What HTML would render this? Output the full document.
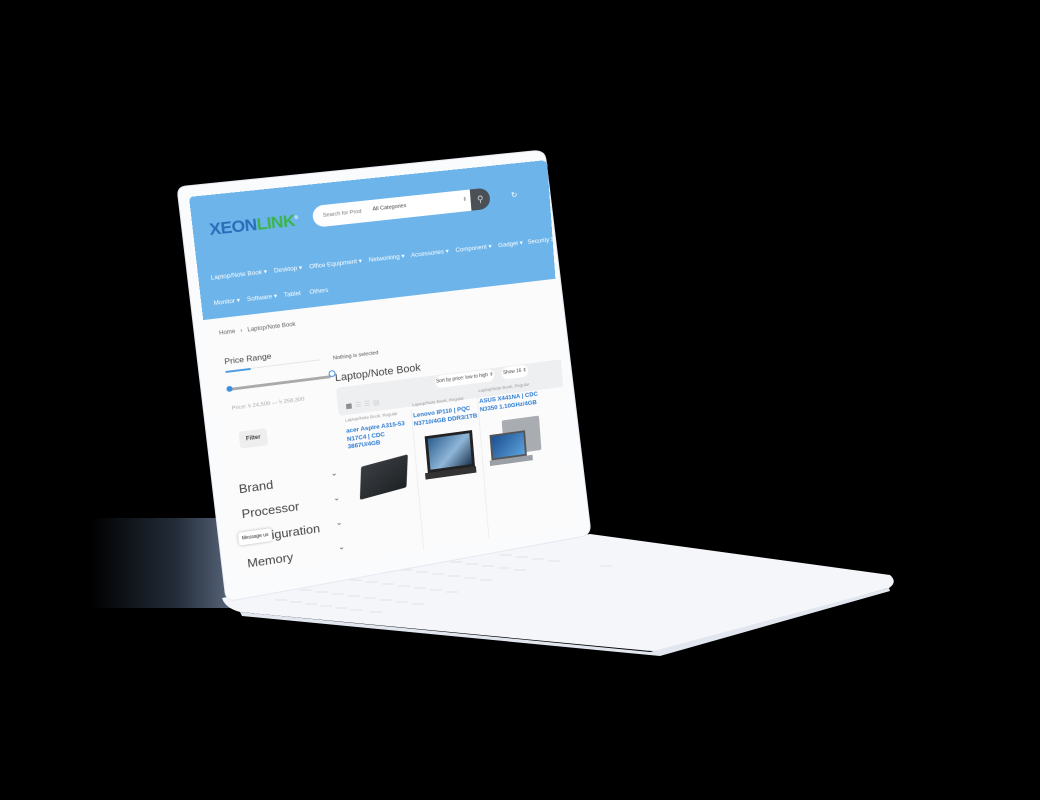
<!DOCTYPE html>
<html><head><meta charset="utf-8"><style>
html,body{margin:0;padding:0;background:#000;width:1040px;height:800px;overflow:hidden;font-family:"Liberation Sans",sans-serif}
#scr{position:absolute;left:0;top:0;width:360px;height:400px;transform-origin:0 0;
transform:matrix3d(1.05839,-0.084075,0,0.00011689, 0.138963,1.024345,0,0.0001243, 0,0,1,0, 189,197,0,1);
background:#fbfbfc;overflow:hidden;border-radius:4px 6px 0 0}
.hd{position:absolute;left:0;top:0;width:360px;height:125px;background:#6cb4ea}
.abs{position:absolute;white-space:nowrap}
.nav{font-size:6.3px;color:#fff}
.g{color:#666}
.card{position:absolute;top:245px;width:68px;height:160px;border-right:1px solid #eee}
.cat{font-size:4.5px;color:#999}
.pt{font-size:6.4px;color:#2a7ad0;font-weight:bold;line-height:8.5px;margin-top:6px}
</style></head><body>
<div class="abs" style="left:90px;top:518px;width:145px;height:90px;background:linear-gradient(90deg,rgba(0,0,0,0),rgba(80,100,130,.45) 60%,rgba(130,150,180,.7));"></div>
<svg width="1040" height="800" style="position:absolute;left:0;top:0">
<path d="M222,598 L590,534 L890,575 Q898,582 889,588 L665,650 Q655,652 640,650 L240,612 Q225,608 222,598Z" fill="#f5f6fa"/>
<path d="M240,612 L650,652 L889,588 L890,591 L660,656 L242,616Z" fill="#e2e6ee"/>
<g stroke="#e3e6ee" stroke-width="1.3">
<path d="M275,600h12M290,602h12M305,604h12M320,606h12M335,608h12M350,610h12M370,612h12"/>
<path d="M300,590h12M316,592h12M332,594h12M348,596h12M364,598h12M380,600h12M396,602h12M412,604h12"/>
<path d="M350,580h12M366,582h12M382,584h12M398,586h12M414,588h12M430,590h12M446,592h12"/>
<path d="M400,570h12M416,572h12M432,574h12M448,576h12M464,578h12M480,580h12"/>
<path d="M450,562h12M466,564h12M482,566h12M498,568h12M514,570h12"/>
<path d="M500,555h12M516,557h12M532,559h12M548,561h12M600,566h12"/>
</g>
<path d="M186,186 L533,151 Q545,150 546,160 L590,525 Q591,535 580,537 L236,600 Q226,601 225,592 L178,196 Q177,187 186,186Z" fill="#fafbfd" stroke="#e6e9f0" stroke-width="1"/>
</svg>
<div id="scr">
<div class="hd"></div>
<div class="abs" style="left:16px;top:25px;font-size:17px;font-weight:bold;letter-spacing:-0.5px"><span style="color:#2a6db8">X</span><span style="color:#2a6db8">EON</span><span style="color:#3bb54a">LINK</span><sup style="font-size:5px;color:#fff">®</sup></div>
<div class="abs" style="left:118px;top:22px;width:170px;height:22px;background:#fff;border-radius:11px"></div>
<div class="abs" style="left:278px;top:22px;width:20px;height:22px;background:#4b5057;border-radius:0 11px 11px 0;color:#ddd;font-size:9px;text-align:center;line-height:22px">⚲</div>
<div class="abs" style="left:128px;top:30px;font-size:5.5px;color:#777">Search for Prod</div>
<div class="abs" style="left:178px;top:29px;font-size:5.5px;color:#444">All Categories</div>
<div class="abs" style="left:270px;top:29px;font-size:5px;color:#555">⇕</div>
<div class="abs" style="left:320px;top:28px;font-size:8px;color:#fff">↻</div>
<div class="abs nav" style="left:12px;top:80px">Laptop/Note Book ▾ &nbsp;&nbsp; Desktop ▾ &nbsp;&nbsp; Office Equipment ▾ &nbsp;&nbsp; Networking ▾ &nbsp;&nbsp; Accessories ▾ &nbsp;&nbsp; Component ▾ &nbsp;&nbsp; Gadget ▾ &nbsp; Security Surve</div>
<div class="abs nav" style="left:12px;top:106px">Monitor ▾ &nbsp;&nbsp; Software ▾ &nbsp;&nbsp; Tablet &nbsp;&nbsp;&nbsp; Others</div>
<div class="abs g" style="left:14px;top:138px;font-size:6px">Home &nbsp; › &nbsp; Laptop/Note Book</div>
<div class="abs" style="left:16px;top:165px;font-size:8.5px;color:#444">Price Range</div>
<div class="abs" style="left:16px;top:180px;width:95px;height:1px;background:#e5e5e5"></div>
<div class="abs" style="left:16px;top:180px;width:25px;height:1.5px;background:#4d9be0"></div>
<div class="abs" style="left:18px;top:198px;width:102px;height:3px;background:#aaa;border-radius:2px"></div>
<div class="abs" style="left:15px;top:196px;width:6px;height:6px;background:#3b8ee0;border-radius:50%"></div>
<div class="abs" style="left:118px;top:193px;width:5px;height:5px;border:1px solid #3b8ee0;background:#fff;border-radius:50%"></div>
<div class="abs" style="left:18px;top:215px;font-size:5.8px;color:#aaa">Price: ৳ 24,500 — ৳ 258,300</div>
<div class="abs" style="left:22px;top:245px;width:28px;height:18px;background:#eee;border-radius:3px;font-size:6px;color:#444;text-align:center;line-height:18px;font-weight:bold">Filter</div>
<div class="abs" style="left:16px;top:298px;font-size:13px;color:#444">Brand</div>
<div class="abs" style="left:16px;top:325px;font-size:13px;color:#444">Processor</div>
<div class="abs" style="left:16px;top:352px;font-size:13px;color:#444">Configuration</div>
<div class="abs" style="left:16px;top:379px;font-size:13px;color:#444">Memory</div>
<div class="abs" style="left:10px;top:352px;width:34px;height:14px;background:#fff;border-radius:3px;box-shadow:0 0 3px rgba(0,0,0,.3);font-size:5px;line-height:14px;text-align:center;color:#222">Message us</div>
<div class="abs" style="left:110px;top:298px;font-size:8px;color:#555">⌄</div>
<div class="abs" style="left:110px;top:325px;font-size:8px;color:#555">⌄</div>
<div class="abs" style="left:110px;top:352px;font-size:8px;color:#555">⌄</div>
<div class="abs" style="left:110px;top:379px;font-size:8px;color:#555">⌄</div>
<div class="abs" style="left:124px;top:178px;font-size:5.5px;color:#555">Nothing is selected</div>
<div class="abs" style="left:124px;top:196px;font-size:11px;color:#444">Laptop/Note Book</div>
<div class="abs" style="left:124px;top:212px;width:240px;height:30px;background:#eeeff1;border-radius:4px"></div>
<div class="abs" style="left:226px;top:213px;width:62px;height:13px;background:#fff;border-radius:7px;font-size:5px;color:#444;line-height:13px;text-align:center">Sort by price: low to high ⇕</div>
<div class="abs" style="left:296px;top:213px;width:28px;height:13px;background:#fff;border-radius:7px;font-size:5px;color:#444;line-height:13px;text-align:center">Show 16 ⇕</div>
<div class="abs" style="left:132px;top:229px;font-size:7px;color:#555;letter-spacing:3px">▦<span style="color:#ccc">☰☰▤</span></div>
<div class="card" style="left:130px"><div class="cat">Laptop/Note Book, Regular</div><div class="pt">acer Aspire A315-53<br>N17C4 | CDC 3867U/4GB</div>
<div style="margin:14px 0 0 10px;width:48px;height:36px;background:linear-gradient(150deg,#3a3e42,#1f2225);transform:skewX(-15deg) rotate(-8deg);border-radius:2px"></div></div>
<div class="card" style="left:200px;top:238px"><div class="cat">Laptop/Note Book, Regular</div><div class="pt">Lenovo IP110 | PQC<br>N3710/4GB DDR3/1TB</div>
<div style="margin:10px 0 0 10px;width:44px;height:34px;background:linear-gradient(135deg,#2d5e8f,#8fb6d8 55%,#1d3550);border:3px solid #222"></div><div style="margin-left:7px;width:54px;height:7px;background:#333"></div></div>
<div class="card" style="left:270px;top:232px;border:none"><div class="cat">Laptop/Note Book, Regular</div><div class="pt">ASUS X441NA | CDC<br>N3350 1.10GHz/4GB</div>
<div style="position:relative;margin:10px 0 0 22px;width:40px;height:38px;background:#a9adb2;border-radius:2px"></div>
<div style="position:relative;margin:-24px 0 0 8px;width:34px;height:24px;background:linear-gradient(135deg,#1d4f8f,#5ba2dd);border:2px solid #555"></div><div style="margin-left:6px;width:46px;height:6px;background:#9ba0a6"></div></div>
</div>
</body></html>
